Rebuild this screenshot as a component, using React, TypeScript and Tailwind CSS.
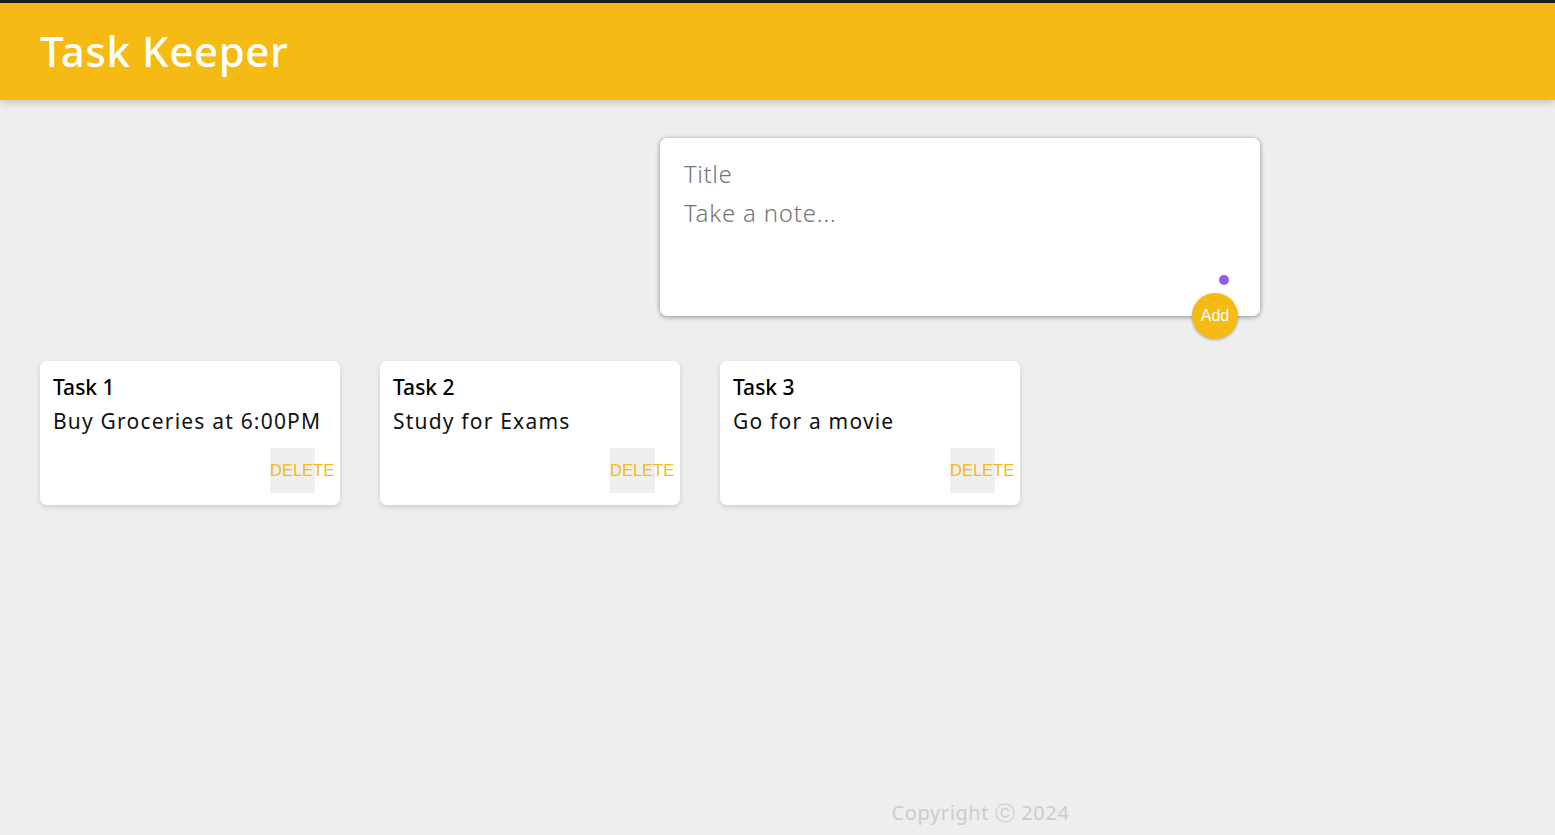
import React from 'react';

type Note = { title: string; content: string };

const notes: Note[] = [
  { title: 'Task 1', content: 'Buy Groceries at 6:00PM' },
  { title: 'Task 2', content: 'Study for Exams' },
  { title: 'Task 3', content: 'Go for a movie' },
];

const body = "font-['Noto_Sans',sans-serif]";

function Header() {
  return (
    <header className="border-t-[3px] border-[#1e1e1e] bg-[#f5ba13] h-[100px] px-[40px] flex items-center shadow-[0_0_10px_rgba(0,0,0,0.3)] relative z-10">
      <h1 className="text-white text-[42px] leading-none font-medium tracking-[0.6px] font-['Noto_Sans',sans-serif] pb-[2px]">
        Task Keeper
      </h1>
    </header>
  );
}

function CreateArea() {
  return (
    <form className="relative ml-[660px] mt-[38px] w-[600px] h-[178px] bg-white rounded-[7px] shadow-[0_1px_5px_rgb(138,137,137)] px-[24px] pt-[16px]">
      <input
        placeholder="Title"
        className={`${body} block w-full text-[24px] font-light leading-[39px] tracking-[0.6px] outline-none placeholder:text-[#757575]`}
      />
      <textarea
        placeholder="Take a note..."
        rows={3}
        className={`${body} block w-full text-[24px] font-light leading-[39px] tracking-[0.8px] resize-none outline-none placeholder:text-[#757575]`}
      />
      <span className="absolute right-[31px] top-[137px] w-[10px] h-[10px] rounded-full bg-[#8f5ce8]" />
      <button
        type="button"
        className="absolute right-[22px] bottom-[-23px] w-[46px] h-[46px] rounded-full bg-[#f5ba13] text-white text-[16px] font-['Liberation_Sans',Arial,sans-serif] shadow-[0_1px_3px_rgba(0,0,0,0.3)]"
      >
        Add
      </button>
    </form>
  );
}

function NoteCard({ title, content }: Note) {
  return (
    <div className={`${body} w-[300px] h-[144px] bg-white rounded-[7px] shadow-[0_2px_5px_#ccc] pl-[13px] pr-[10px] pt-[12px] flex flex-col`}>
      <h2 className="text-[21px] font-medium leading-[28px] text-black">{title}</h2>
      <p className="text-[21px] leading-[32px] tracking-[1.2px] text-[#111] whitespace-nowrap mt-[4px]">{content}</p>
      <div className="flex justify-end mt-[11px] mr-[15px]">
        <div className="w-[45px] h-[45px] bg-[#efefef] flex items-center">
          <span className="whitespace-nowrap text-[16.5px] text-[#f5ba13] font-['Liberation_Sans',Arial,sans-serif]">DELETE</span>
        </div>
      </div>
    </div>
  );
}

export default function App() {
  return (
    <div className="h-screen bg-[#eeeeee] flex flex-col overflow-hidden">
      <Header />
      <CreateArea />
      <div className="flex gap-[40px] pl-[40px] mt-[45px]">
        {notes.map((n) => (
          <NoteCard key={n.title} {...n} />
        ))}
      </div>
      <footer className={`${body} mt-auto h-[44px] pl-[406px] flex items-center justify-center text-[20px] tracking-[0.6px] text-[#cccccc]`}>
        Copyright ⓒ 2024
      </footer>
    </div>
  );
}
